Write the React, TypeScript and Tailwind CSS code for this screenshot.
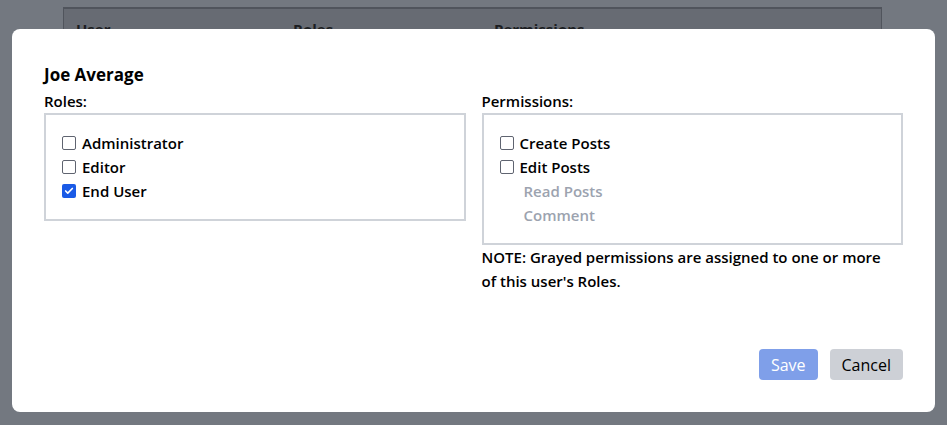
import { Check } from 'lucide-react'

const roles = [
  { name: 'Administrator', checked: false },
  { name: 'Editor', checked: false },
  { name: 'End User', checked: true },
]

const permissions = [
  { name: 'Create Posts', inherited: false },
  { name: 'Edit Posts', inherited: false },
  { name: 'Read Posts', inherited: true },
  { name: 'Comment', inherited: true },
]

function Box({ checked }: { checked: boolean }) {
  if (checked) {
    return (
      <span className="w-[14px] h-[14px] rounded-[2px] bg-[#1a5ae6] flex items-center justify-center shrink-0">
        <Check className="w-[10px] h-[10px] text-white" strokeWidth={4} />
      </span>
    )
  }
  return <span className="w-[14px] h-[14px] rounded-[2px] border border-[#5f6470] bg-white shrink-0" />
}

export default function App() {
  return (
    <div className="relative h-[425px] w-full overflow-hidden bg-[#737880] font-['Open_Sans','Liberation_Sans',sans-serif]">
      {/* table behind the overlay */}
      <div className="ml-[63px] mr-[65px] mt-[7px] h-[300px] border-t-2 border-x border-[#50545c] bg-[#676b73]">
        <div className="flex pt-[10px] text-[15px] font-bold leading-5 text-[#1c1e22]">
          <div className="pl-3 w-[229px]">User</div>
          <div className="w-[201px]">Roles</div>
          <div>Permissions</div>
        </div>
      </div>

      {/* modal */}
      <div className="absolute inset-0 flex justify-center pt-[29px] px-3">
        <div className="w-full h-[383px] bg-white rounded-lg px-8 pt-8 pb-8 flex flex-col text-black">
          <h2 className="text-[17px] font-bold leading-7">Joe Average</h2>
          <div className="grid grid-cols-2 gap-4 text-[15px] font-semibold leading-6">
            <div>
              <div>Roles:</div>
              <div className="border-2 border-[#cfd3d9] px-4 py-4">
                {roles.map((r) => (
                  <label key={r.name} className="flex items-center gap-[6px] h-6">
                    <Box checked={r.checked} />
                    <span>{r.name}</span>
                  </label>
                ))}
              </div>
            </div>
            <div>
              <div>Permissions:</div>
              <div className="border-2 border-[#cfd3d9] px-4 py-4">
                {permissions.map((p) =>
                  p.inherited ? (
                    <div key={p.name} className="h-6 pl-6 text-[#9ca3af]">
                      {p.name}
                    </div>
                  ) : (
                    <label key={p.name} className="flex items-center gap-[6px] h-6">
                      <Box checked={false} />
                      <span>{p.name}</span>
                    </label>
                  )
                )}
              </div>
              <p className="pr-3">NOTE: Grayed permissions are assigned to one or more of this user's Roles.</p>
            </div>
          </div>
          <div className="mt-auto flex justify-end gap-3 text-base">
            <button className="h-[31px] px-3 rounded bg-[#7f9fe9] text-white">Save</button>
            <button className="h-[31px] px-3 rounded bg-[#cdd0d6] text-black">Cancel</button>
          </div>
        </div>
      </div>
    </div>
  )
}
